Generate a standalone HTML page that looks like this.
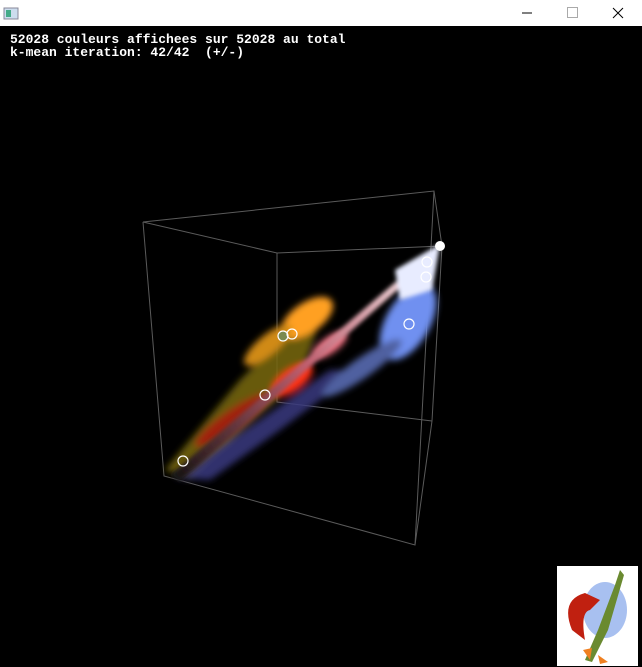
<!DOCTYPE html>
<html><head><meta charset="utf-8"><style>
html,body{margin:0;padding:0;width:642px;height:667px;overflow:hidden;background:#000}
.tb{position:absolute;left:0;top:0;width:642px;height:26px;background:#fff}
.txt{position:absolute;left:10px;top:33px;color:#fff;font:bold 13px/13px "Liberation Mono",monospace;white-space:pre}
</style></head><body>
<div class="tb">
<svg width="642" height="26" style="position:absolute;left:0;top:0">
<rect x="4" y="8" width="14" height="11" fill="#cde" stroke="#889"/>
<rect x="6" y="10" width="5" height="7" fill="#4a8"/>
<line x1="522" y1="13" x2="532" y2="13" stroke="#000"/>
<rect x="567.5" y="7.5" width="10" height="10" fill="none" stroke="#aaa"/>
<path d="M613 8 L623 18 M623 8 L613 18" stroke="#000" stroke-width="1"/>
</svg></div>
<div class="txt">52028 couleurs affichees sur 52028 au total
k-mean iteration: 42/42  (+/-)</div>
<svg width="642" height="667" style="position:absolute;left:0;top:0">
<defs>
<filter id="b" x="-50%" y="-50%" width="200%" height="200%"><feGaussianBlur stdDeviation="3.5"/></filter>
<filter id="b2" x="-50%" y="-50%" width="200%" height="200%"><feGaussianBlur stdDeviation="2"/></filter>
<linearGradient id="ax" x1="165" y1="475" x2="440" y2="246" gradientUnits="userSpaceOnUse">
<stop offset="0" stop-color="#101010"/><stop offset="0.5" stop-color="#c06070"/><stop offset="1" stop-color="#ffffff"/></linearGradient>
</defs>
<g stroke="#5a5a5a" stroke-width="1" fill="none">
<path d="M143 222 L434 191 L442 246 L277 253 Z"/>
<path d="M143 222 L164 476 L415 545 L432 421 L442 246"/>
<path d="M434 191 L415 545"/>
<path d="M277 253 L277 402 L432 421"/>
</g>
<g filter="url(#b)">
<path d="M165 470 L240 380 L290 330 L320 320 L300 380 L230 440 L190 480 Z" fill="#7a6a10" opacity="0.85"/>
<path d="M175 478 L260 420 L330 370 L360 370 L280 430 L210 480 Z" fill="#3a3a80" opacity="0.85"/>
<ellipse cx="307" cy="318" rx="30" ry="15" fill="#ffa020" transform="rotate(-35 307 318)"/>
<ellipse cx="268" cy="345" rx="30" ry="10" fill="#d08a18" transform="rotate(-40 268 345)"/>
<ellipse cx="292" cy="380" rx="24" ry="11" fill="#ff3018" transform="rotate(-35 292 380)"/>
<ellipse cx="232" cy="420" rx="45" ry="10" fill="#a02010" transform="rotate(-35 232 420)"/>
<ellipse cx="408" cy="322" rx="22" ry="42" fill="#7090f0" transform="rotate(30 408 322)"/>
<ellipse cx="330" cy="345" rx="20" ry="8" fill="#f07080" transform="rotate(-35 330 345)"/>
<ellipse cx="362" cy="368" rx="48" ry="10" fill="#5060a0" transform="rotate(-35 362 368)"/>
</g>
<g filter="url(#b2)">
<path d="M170 475 L440 244 L436 256 L180 482 Z" fill="url(#ax)"/>
<path d="M395 270 L440 244 L432 290 L400 300 Z" fill="#e8ecff"/>
</g>
<circle cx="440" cy="246" r="5" fill="#fff"/>
<g fill="none" stroke="#fff" stroke-width="1.2">
<circle cx="427" cy="262" r="5"/><circle cx="426" cy="277" r="5"/>
<circle cx="409" cy="324" r="5"/>
<circle cx="283" cy="336" r="5" fill="#7a8a50"/><circle cx="292" cy="334" r="5"/>
<circle cx="265" cy="395" r="5"/><circle cx="183" cy="461" r="5"/>
</g>
<rect x="557" y="566" width="81" height="100" fill="#fff"/>
<ellipse cx="605" cy="610" rx="22" ry="28" fill="#a8c0f0"/>
<path d="M572 630 Q560 600 585 593 L600 600 L590 610 Q580 612 585 640 Z" fill="#c02010"/>
<path d="M585 660 L598 630 L615 585 L620 570 L624 575 L608 630 L592 662 Z" fill="#6a8a30"/>
<path d="M583 650 L592 648 L590 660 Z M598 655 L608 662 L600 664 Z" fill="#f08020"/>
</svg>
</body></html>
